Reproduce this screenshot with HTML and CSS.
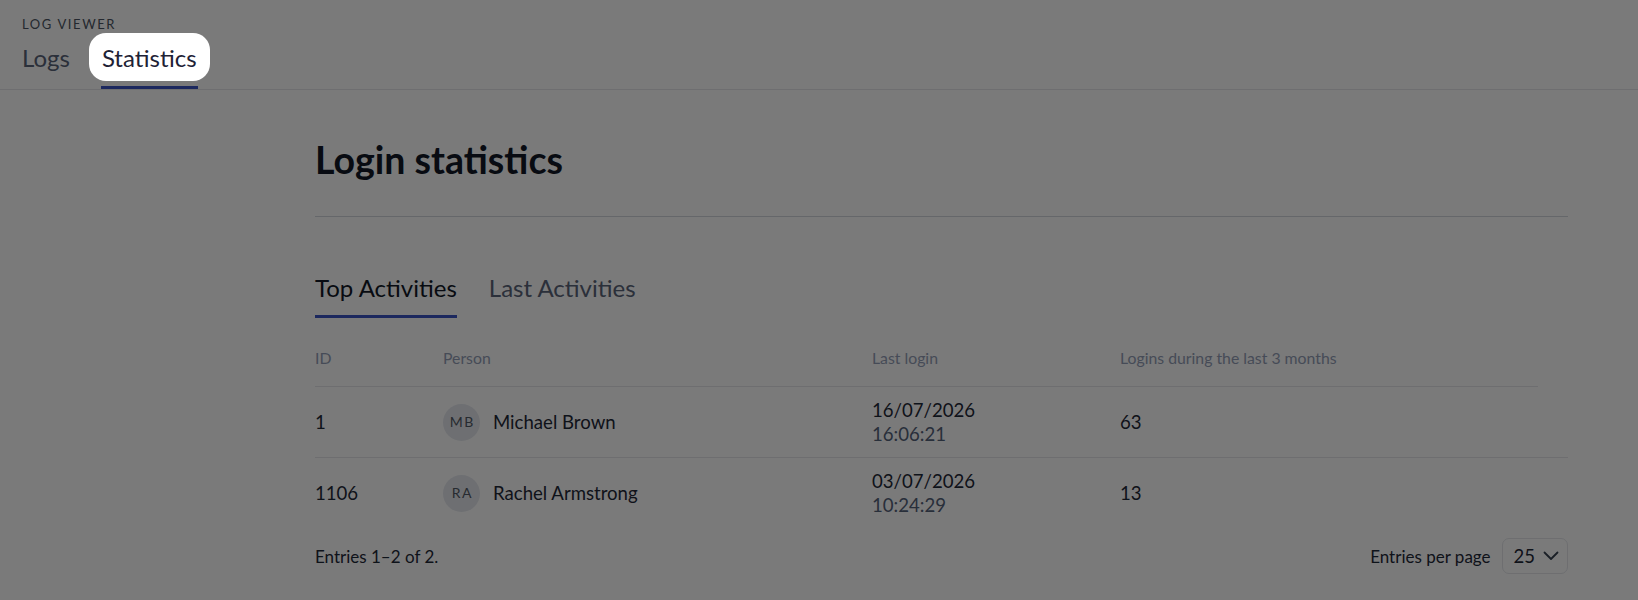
FILE: index.html
```html
<!DOCTYPE html>
<html lang="en">
<head>
  <meta charset="UTF-8" />
  <title>Log viewer - Statistics</title>
  <link rel="stylesheet" href="styles.css">
</head>
<body>
  <header class="topbar">
    <div class="app-name">Log viewer</div>
    <nav class="main-nav">
      <a class="nav-tab"><span class="nav-label">Logs</span></a>
      <a class="nav-tab is-active"><span class="nav-label spotlight">Statistics</span></a>
    </nav>
  </header>

  <main class="content">
    <h1 class="page-title">Login statistics</h1>

    <div class="sub-tabs">
      <a class="sub-tab is-active">Top Activities</a>
      <a class="sub-tab">Last Activities</a>
    </div>

    <div class="stats-table">
      <div class="table-head">
        <div>ID</div>
        <div>Person</div>
        <div>Last login</div>
        <div>Logins during the last 3 months</div>
      </div>
      <div class="table-row">
        <div>1</div>
        <div class="person"><span class="avatar">MB</span>Michael Brown</div>
        <div class="login-date">16/07/2026<span class="login-time">16:06:21</span></div>
        <div>63</div>
      </div>
      <div class="table-row">
        <div>1106</div>
        <div class="person"><span class="avatar">RA</span>Rachel Armstrong</div>
        <div class="login-date">03/07/2026<span class="login-time">10:24:29</span></div>
        <div>13</div>
      </div>
    </div>

    <div class="table-footer">
      <span>Entries 1–2 of 2.</span>
      <label class="page-size">
        Entries per page
        <span class="select-box">25
          <svg width="16" height="10" viewBox="0 0 16 10" fill="none" stroke="currentColor" stroke-width="1.8" stroke-linecap="round" stroke-linejoin="round"><path d="M1.5 1.5 8 8l6.5-6.5"/></svg>
        </span>
      </label>
    </div>
  </main>
</body>
</html>
```

FILE: styles.css
```css
body {
  margin: 0;
  font-family: Lato, "Open Sans", sans-serif;
  background: #fff;
  color: #1f2937;
}
.topbar {
  padding: 16px 22px 0;
  border-bottom: 1px solid #e5e7eb;
}
.app-name {
  font-size: 13px;
  line-height: 16px;
  letter-spacing: 1.6px;
  text-transform: uppercase;
  color: #4b5563;
}
.main-nav {
  display: flex;
  gap: 6px;
  margin: 1px 0 0 -13px;
}
.nav-tab {
  position: relative;
  padding-bottom: 8px;
  font-size: 24px;
  color: #5a6479;
}
.nav-label {
  display: block;
  height: 48px;
  line-height: 49px;
  padding: 0 13px;
}
.nav-tab.is-active {
  color: #1e2235;
}
.nav-tab.is-active::after {
  content: "";
  position: absolute;
  left: 12px;
  right: 12px;
  bottom: 0;
  height: 3px;
  background: #3b55c4;
}
/* tour highlight: everything but the tab is dimmed */
.spotlight {
  position: relative;
}
.spotlight::before {
  content: "";
  position: absolute;
  inset: 0;
  border-radius: 17px;
  box-shadow: 0 0 0 3000px rgba(0, 0, 0, 0.52);
  z-index: 10;
  pointer-events: none;
}
.content {
  padding: 0 70px 40px 315px;
}
.page-title {
  margin: 47px 0 0;
  padding-bottom: 33px;
  font-size: 37.5px;
  line-height: 46px;
  font-weight: 700;
  color: #111827;
  border-bottom: 1px solid #d4d8de;
}
.sub-tabs {
  display: flex;
  gap: 32px;
  margin-top: 56px;
}
.sub-tab {
  font-size: 24px;
  line-height: 30px;
  padding-bottom: 12px;
  border-bottom: 3px solid transparent;
  color: #5a6479;
}
.sub-tab.is-active {
  color: #111827;
  border-bottom-color: #3b55c4;
}
.stats-table {
  margin-top: 30px;
}
.table-head,
.table-row {
  display: grid;
  grid-template-columns: 128px 429px 248px 1fr;
  align-items: center;
}
.table-head {
  margin-right: 30px;
  padding-bottom: 18px;
  font-size: 15.8px;
  line-height: 20px;
  color: #939eb6;
  border-bottom: 1px solid #e5e7eb;
}
.table-row {
  padding: 11px 0;
  font-size: 18.6px;
  line-height: 24px;
  color: #1f2937;
  border-bottom: 1px solid #e5e7eb;
}
.table-row:last-child {
  border-bottom: none;
}
.person {
  display: flex;
  align-items: center;
  gap: 13px;
}
.avatar {
  width: 37px;
  height: 37px;
  border-radius: 50%;
  background: #e6e9ef;
  color: #525a66;
  font-size: 14px;
  letter-spacing: 1.5px;
  text-indent: 1.5px;
  display: flex;
  align-items: center;
  justify-content: center;
}
.login-time {
  display: block;
  color: #55627a;
}
.table-footer {
  display: flex;
  justify-content: space-between;
  align-items: center;
  margin-top: 10px;
  font-size: 17px;
  color: #1f2937;
}
.page-size {
  display: flex;
  align-items: center;
  gap: 11px;
}
.select-box {
  display: flex;
  align-items: center;
  gap: 8px;
  height: 34px;
  padding: 0 8px 0 11px;
  border: 1px solid #e5e7eb;
  border-radius: 7px;
  font-size: 18.5px;
  color: #1f2937;
}
.select-box svg {
  color: #374151;
}
```
